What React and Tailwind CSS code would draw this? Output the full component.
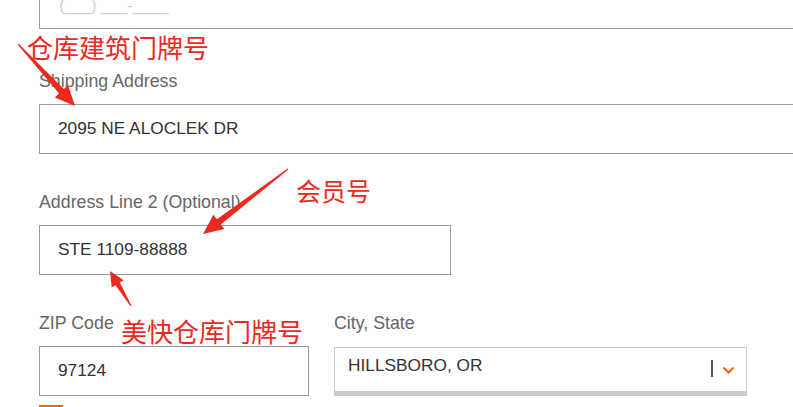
import React from 'react';

const RED = '#ea2a20';

function Arrow({ from, to, head = 18, headW = 8, tailW = 0.6, neckW = 3 }) {
  const [x0, y0] = from;
  const [x1, y1] = to;
  const len = Math.hypot(x1 - x0, y1 - y0);
  const dx = (x1 - x0) / len;
  const dy = (y1 - y0) / len;
  const nx = -dy;
  const ny = dx;
  const bx = x1 - dx * head;
  const by = y1 - dy * head;
  const pts = [
    [x0 + nx * tailW, y0 + ny * tailW],
    [bx + nx * neckW, by + ny * neckW],
    [bx + nx * headW, by + ny * headW],
    [x1, y1],
    [bx - nx * headW, by - ny * headW],
    [bx - nx * neckW, by - ny * neckW],
    [x0 - nx * tailW, y0 - ny * tailW]
  ]
    .map((p) => p.map((v) => v.toFixed(1)).join(','))
    .join(' ');
  return <polygon points={pts} fill={RED} />;
}

function Label({ children }) {
  return <div className="text-[17.8px] leading-[20px] text-[#666]">{children}</div>;
}

export default function App() {
  return (
    <div className="relative h-[407px] w-[793px] overflow-hidden bg-white font-['Liberation_Sans',Arial,sans-serif]">
      <div className="flex flex-col pl-[39px]">
        {/* phone field, cut off at the top */}
        <div className="flex h-[29px] w-[800px] items-end border-x border-b border-[#9e9e9e] pb-[12px] pl-[19px]">
          <span className="text-[17px] leading-[20px] tracking-[-0.5px] text-[#cfcfcf]">(___) ___-____</span>
        </div>

        <div className="mt-[42px]">
          <Label>Shipping Address</Label>
        </div>
        <div className="mt-[13px] flex h-[50px] w-[800px] items-center border border-[#9e9e9e] pl-[18px] text-[17.3px] text-[#333]">
          2095 NE ALOCLEK DR
        </div>

        <div className="mt-[38px]">
          <Label>Address Line 2 (Optional)</Label>
        </div>
        <div className="mt-[13px] flex h-[50px] w-[412px] items-center border border-[#9e9e9e] pl-[18px] text-[17.3px] text-[#333]">
          STE 1109-88888
        </div>

        <div className="mt-[38px] flex gap-[25px]">
          <div className="flex w-[270px] flex-col">
            <Label>ZIP Code</Label>
            <div className="mt-[13px] flex h-[50px] items-center border border-[#9e9e9e] pl-[18px] text-[17.3px] text-[#333]">
              97124
            </div>
            <div className="mt-[9px] h-[4px] w-[24px] bg-[#f96302]" />
          </div>

          <div className="flex w-[413px] flex-col">
            <Label>City, State</Label>
            <div className="mt-[14px] flex h-[49px] border border-b-[5px] border-[#cccccc] pl-[13px] pr-[11px]">
              <span className="pt-[7px] text-[17.3px] leading-[20px] text-[#333]">HILLSBORO, OR</span>
              <div className="ml-auto mt-[12px] flex items-start gap-[9px]">
                <div className="h-[17px] w-[2px] bg-[#555]" />
                <svg width="13" height="9" viewBox="0 0 13 9" className="mt-[6px]">
                  <path d="M1.5 1.5 L6.5 6.5 L11.5 1.5" fill="none" stroke="#f96302" strokeWidth="2" />
                </svg>
              </div>
            </div>
          </div>
        </div>
      </div>

      {/* annotations */}
      <div className="absolute left-[27px] top-[34px] font-['Noto_Sans_CJK_SC',sans-serif] text-[26px] leading-[26px] text-[#ea2a20]">
        仓库建筑门牌号
      </div>
      <div className="absolute left-[296px] top-[178px] font-['Noto_Sans_CJK_SC',sans-serif] text-[25px] leading-[25px] text-[#ea2a20]">
        会员号
      </div>
      <div className="absolute left-[121px] top-[318px] font-['Noto_Sans_CJK_SC',sans-serif] text-[26px] leading-[26px] text-[#ea2a20]">
        美快仓库门牌号
      </div>
      <svg className="pointer-events-none absolute left-0 top-0" width="793" height="407">
        <Arrow from={[18, 44]} to={[75, 106]} head={20} headW={9} neckW={3.2} />
        <Arrow from={[288, 169]} to={[203, 234]} head={20} headW={9} neckW={3.2} />
        <Arrow from={[131, 306]} to={[110, 271]} head={15} headW={7} neckW={2.6} />
      </svg>
    </div>
  );
}
